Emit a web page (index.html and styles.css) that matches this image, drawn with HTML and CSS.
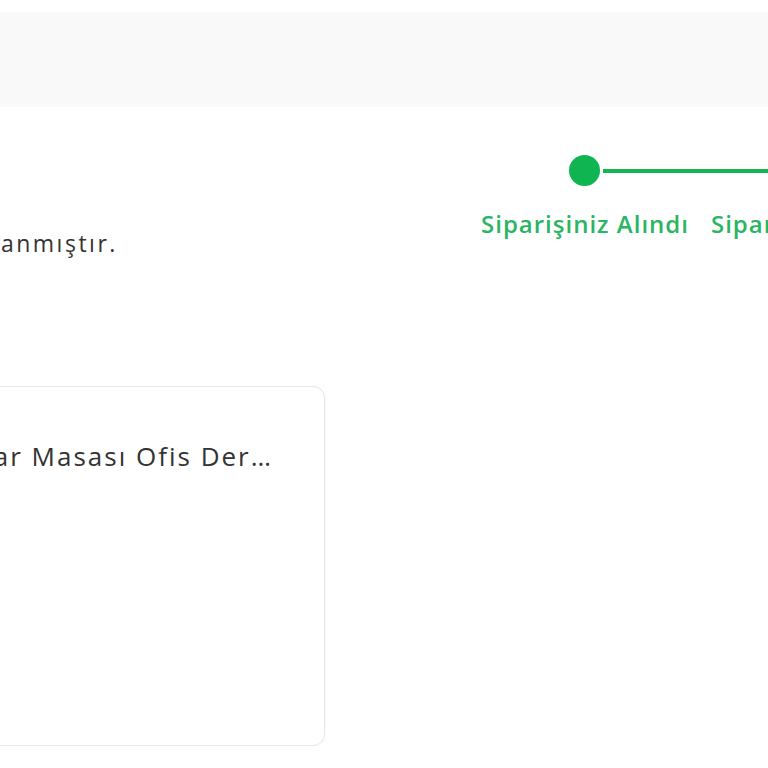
FILE: index.html
```html
<!DOCTYPE html>
<html lang="tr">
<head>
    <meta charset="UTF-8">
    <meta name="viewport" content="width=device-width, initial-scale=1.0">
    <title>Sipariş Özeti</title>
    <link rel="stylesheet" href="styles.css">
</head>
<body>
    <div class="top-bar"></div>
    <div class="main">
        <div class="summary">
            <p class="note">Siparişiniz başarıyla tamamlanmıştır.</p>
            <div class="product-card">
                <div class="thumb"></div>
                <div class="product-info">
                    <div class="product-name">Oyuncu Bilgisayar Masası Ofis Derslik Çalışma Masası</div>
                </div>
            </div>
        </div>
        <div class="tracker">
            <div class="step first">
                <div class="track"><span class="dot"></span></div>
                <div class="label">Siparişiniz Alındı</div>
            </div>
            <div class="step">
                <div class="track"><span class="dot"></span></div>
                <div class="label">Siparişiniz Hazırlanıyor</div>
            </div>
        </div>
    </div>
</body>
</html>
```

FILE: styles.css
```css
body {
    margin: 0;
    font-family: "Open Sans", Lato, sans-serif;
    color: #333;
    background: #fff;
    overflow: hidden;
}

.top-bar {
    height: 95px;
    margin-top: 12px;
    background-color: #f9f9f9;
}

.main {
    display: flex;
    margin-left: -367px;
    padding-top: 48px;
}

.summary {
    flex: 0 0 837px;
}

.note {
    margin: 73px 0 0;
    font-size: 23px;
    line-height: 30px;
    letter-spacing: 2.5px;
    white-space: nowrap;
}

.product-card {
    display: flex;
    width: 692px;
    height: 360px;
    margin-top: 128px;
    box-sizing: border-box;
    border: 1px solid #e6e6e6;
    border-radius: 12px;
    box-shadow: 0 1px 3px rgba(0, 0, 0, 0.05);
}

.thumb {
    flex: 0 0 99px;
    margin: 20px;
}

.product-info {
    flex: 1;
    min-width: 0;
    padding: 52px 52px 0 0;
}

.product-name {
    font-size: 26px;
    line-height: 34px;
    letter-spacing: 2px;
    white-space: nowrap;
    overflow: hidden;
    text-overflow: ellipsis;
}

.tracker {
    display: flex;
    flex: 0 0 auto;
}

.step {
    display: flex;
    flex-direction: column;
    align-items: center;
}

.track {
    display: flex;
    align-items: center;
    align-self: stretch;
    height: 31px;
}

.track::before,
.track::after {
    content: "";
    flex: 1;
    height: 4px;
    background-color: #12b551;
}

.track::before {
    margin-right: 3px;
}

.track::after {
    margin-left: 3px;
}

.step.first .track::before {
    visibility: hidden;
}

.dot {
    width: 31px;
    height: 31px;
    border-radius: 50%;
    background-color: #0fb550;
}

.label {
    margin-top: 24px;
    padding: 0 11px;
    font-size: 24px;
    font-weight: 600;
    line-height: 28px;
    letter-spacing: 1px;
    color: #2ab564;
    white-space: nowrap;
}
```
